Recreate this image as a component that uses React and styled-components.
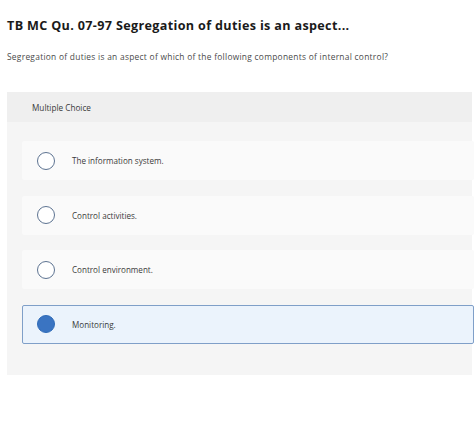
import React from "react";
import styled, { createGlobalStyle } from "styled-components";

const Global = createGlobalStyle`
  html, body { margin: 0; padding: 0; background: #ffffff; }
  body { font-family: "Open Sans", sans-serif; color: #222; }
`;

const Page = styled.div`
  width: 474px;
  height: 442px;
  overflow: hidden;
  padding: 18px 0 0 7px;
  box-sizing: border-box;
`;

const Title = styled.h1`
  margin: 0;
  font-family: "Open Sans", sans-serif;
  font-weight: 700;
  font-size: 12.6px;
  line-height: 16px;
  letter-spacing: 0.34px;
  color: #1a1a1a;
`;

const Prompt = styled.p`
  margin: 17px 0 0;
  font-family: "Open Sans", sans-serif;
  font-size: 8.4px;
  line-height: 12px;
  letter-spacing: 0.28px;
  color: #4a4a4a;
`;

const Panel = styled.section`
  margin-top: 29px;
  width: 465px;
  background: #f5f5f5;
`;

const PanelHeader = styled.div`
  height: 30px;
  display: flex;
  align-items: center;
  padding-left: 25px;
  background: #efefef;
  font-family: "Open Sans", sans-serif;
  font-size: 8.2px;
  color: #3a3a3a;
`;

const Options = styled.div`
  display: flex;
  flex-direction: column;
  gap: 15.5px;
  padding: 19px 0 31px 15px;
  margin-right: -2px;
`;

const Option = styled.div`
  height: 39px;
  box-sizing: border-box;
  display: flex;
  align-items: center;
  gap: 17px;
  padding-left: ${(p) => (p.$selected ? 14 : 15)}px;
  background: ${(p) => (p.$selected ? "#ebf3fc" : "#fafafa")};
  border: ${(p) => (p.$selected ? "1px solid #7f9fc8" : "none")};
  border-radius: 2px;
`;

const Radio = styled.span`
  width: 18px;
  height: 18px;
  box-sizing: border-box;
  border-radius: 50%;
  flex: none;
  border: ${(p) => (p.$selected ? "1px solid #2f6bb8" : "1.2px solid #5d7391")};
  background: ${(p) => (p.$selected ? "#3a74c2" : "#ffffff")};
`;

const Label = styled.span`
  font-family: "Open Sans", sans-serif;
  font-size: 8.1px;
  color: #3a3a3a;
`;

const options = [
  "The information system.",
  "Control activities.",
  "Control environment.",
  "Monitoring.",
];

export default function App() {
  return (
    <Page>
      <Global />
      <Title>TB MC Qu. 07-97 Segregation of duties is an aspect...</Title>
      <Prompt>
        Segregation of duties is an aspect of which of the following components of internal control?
      </Prompt>
      <Panel>
        <PanelHeader>Multiple Choice</PanelHeader>
        <Options>
          {options.map((o, i) => (
            <Option key={o} $selected={i === 3}>
              <Radio $selected={i === 3} />
              <Label>{o}</Label>
            </Option>
          ))}
        </Options>
      </Panel>
    </Page>
  );
}
